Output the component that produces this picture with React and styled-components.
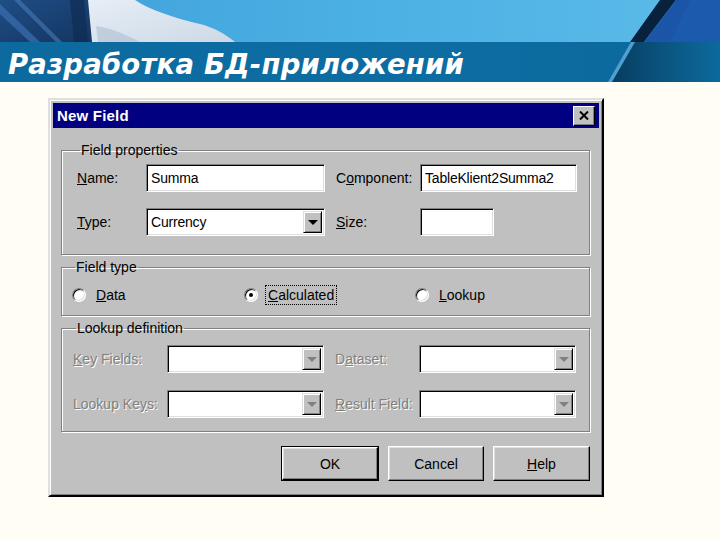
import React from "react";
import styled, { createGlobalStyle } from "styled-components";

const Global = createGlobalStyle`
  html, body { margin: 0; padding: 0; }
  body { background: #fffdf4; font-family: "Liberation Sans", Arial, sans-serif; }
`;

const Page = styled.div`
  width: 720px;
  height: 540px;
  overflow: hidden;
  background: #fffdf4;
  display: flex;
  flex-direction: column;
`;

const Header = styled.header`
  display: flex;
  flex-direction: column;
`;

const PhotoStrip = styled.svg`
  display: block;
  width: 720px;
  height: 42px;
`;

const TitleBand = styled.div`
  position: relative;
  height: 40px;
  background: linear-gradient(90deg, #0c6a9f 0%, #0d6da2 60%, #0c6a9e 85%);
  display: flex;
  align-items: center;
  padding-left: 8px;
  overflow: hidden;
`;

const BandCorner = styled.svg`
  position: absolute;
  right: 0;
  top: 0;
  width: 120px;
  height: 40px;
`;

const Title = styled.h1`
  margin: 0;
  font-family: "DejaVu Sans", Verdana, sans-serif;
  font-weight: bold;
  font-style: italic;
  font-size: 27.5px;
  color: #ffffff;
  letter-spacing: 0.2px;
  position: relative;
  top: 2px;
`;

const Content = styled.main`
  padding: 16px 0 0 48px;
`;

const Window = styled.div`
  width: 556px;
  height: 399px;
  box-sizing: border-box;
  background: #c0c0c0;
  border-top: 2px solid #dfdfdf;
  border-left: 2px solid #dfdfdf;
  border-right: 2px solid #000000;
  border-bottom: 2px solid #000000;
  box-shadow: inset 1px 1px 0 #ffffff, inset -1px -1px 0 #808080;
  padding: 3px;
  display: flex;
  flex-direction: column;
  font-family: "Liberation Sans", Arial, sans-serif;
  font-size: 14px;
  color: #000;
`;

const Caption = styled.div`
  height: 25px;
  background: #000080;
  display: flex;
  align-items: center;
  justify-content: space-between;
  padding: 0 4px 0 4px;
`;

const CaptionText = styled.span`
  color: #fff;
  font-weight: bold;
  font-size: 15px;
  letter-spacing: 0.2px;
`;

const CloseBtn = styled.div`
  width: 22px;
  height: 20px;
  box-sizing: border-box;
  background: #c0c0c0;
  border-top: 1px solid #fff;
  border-left: 1px solid #fff;
  border-right: 1px solid #000;
  border-bottom: 1px solid #000;
  box-shadow: inset -1px -1px 0 #808080;
  display: flex;
  align-items: center;
  justify-content: center;
`;

const Body = styled.div`
  flex: 1;
  padding: 14px 9px 0 8px;
  display: flex;
  flex-direction: column;
  gap: 4px;
`;

const Group = styled.fieldset`
  margin: 0;
  padding: ${(p) => p.$pad || "4px 10px 10px 10px"};
  border: 1px solid #808080;
  box-shadow: 1px 1px 0 #ffffff, inset 1px 1px 0 #ffffff;
  height: ${(p) => p.$h}px;
  box-sizing: border-box;
`;

const Legend = styled.legend`
  padding: 0 1px;
  margin-left: 3px;
  font-size: 14px;
  line-height: 16px;
`;

const FieldGrid = styled.div`
  display: grid;
  grid-template-columns: ${(p) => p.$cols};
  row-gap: ${(p) => p.$rowGap}px;
  align-items: center;
`;

const Label = styled.span`
  font-size: 14px;
  color: ${(p) => (p.$disabled ? "#808080" : "#000")};
  text-shadow: ${(p) => (p.$disabled ? "1px 1px 0 #ffffff" : "none")};
  u { text-decoration: underline; }
`;

const Edit = styled.div`
  height: 28px;
  width: ${(p) => (p.$w ? `${p.$w}px` : "auto")};
  box-sizing: border-box;
  background: #fff;
  border-top: 1px solid #808080;
  border-left: 1px solid #808080;
  border-right: 1px solid #fff;
  border-bottom: 1px solid #fff;
  box-shadow: inset 1px 1px 0 #000, inset -1px -1px 0 #dfdfdf;
  display: flex;
  align-items: center;
  padding-left: 4px;
  font-size: 14px;
  letter-spacing: -0.2px;
`;

const Combo = styled(Edit)`
  padding: 2px 2px 2px 4px;
  justify-content: space-between;
`;

const ComboText = styled.span`
  flex: 1;
`;

const ArrowBtn = styled.div`
  width: 19px;
  height: 100%;
  box-sizing: border-box;
  background: #c0c0c0;
  border-top: 1px solid #dfdfdf;
  border-left: 1px solid #dfdfdf;
  border-right: 1px solid #000;
  border-bottom: 1px solid #000;
  box-shadow: inset 1px 1px 0 #fff, inset -1px -1px 0 #808080;
  display: flex;
  align-items: center;
  justify-content: center;
`;

const Arrow = styled.div`
  width: 0;
  height: 0;
  border-left: 5px solid transparent;
  border-right: 5px solid transparent;
  border-top: 5px solid ${(p) => (p.$disabled ? "#808080" : "#000")};
`;

const RadioRow = styled.div`
  display: grid;
  grid-template-columns: 172px 171px 1fr;
  align-items: center;
`;

const RadioItem = styled.div`
  display: flex;
  align-items: center;
  gap: 8px;
`;

const RadioCircle = styled.div`
  width: 14px;
  height: 14px;
  box-sizing: border-box;
  border-radius: 50%;
  background: #fff;
  border: 1px solid;
  border-color: #808080 #ffffff #ffffff #808080;
  box-shadow: inset 1px 1px 0 #000, inset -1px -1px 0 #dfdfdf;
  display: flex;
  align-items: center;
  justify-content: center;
  &::after {
    content: "";
    width: 4px;
    height: 4px;
    border-radius: 50%;
    background: ${(p) => (p.$checked ? "#000" : "transparent")};
  }
`;

const RadioLabel = styled.span`
  font-size: 14px;
  padding: 1px 2px;
  outline: ${(p) => (p.$focus ? "1px dotted #000" : "none")};
`;

const ButtonRow = styled.div`
  display: flex;
  justify-content: flex-end;
  gap: 9px;
  padding-top: 10px;
`;

const Button = styled.div`
  width: ${(p) => p.$w}px;
  height: 35px;
  box-sizing: border-box;
  background: #c0c0c0;
  border: ${(p) => (p.$default ? "1px solid #000" : "none")};
  display: flex;
`;

const ButtonFace = styled.div`
  flex: 1;
  box-sizing: border-box;
  border-top: 1px solid #fff;
  border-left: 1px solid #fff;
  border-right: 1px solid #000;
  border-bottom: 1px solid #000;
  box-shadow: inset -1px -1px 0 #808080, inset 1px 1px 0 #dfdfdf;
  display: flex;
  align-items: center;
  justify-content: center;
  font-size: 14px;
`;

function ComboBox({ text, w, disabled }) {
  return (
    <Combo $w={w}>
      <ComboText>{text}</ComboText>
      <ArrowBtn>
        <Arrow $disabled={disabled} />
      </ArrowBtn>
    </Combo>
  );
}

function Photo() {
  return (
    <PhotoStrip viewBox="0 0 720 42" preserveAspectRatio="none">
      <defs>
        <linearGradient id="sky" x1="0" y1="0" x2="1" y2="0">
          <stop offset="0" stopColor="#3f9fd8" />
          <stop offset="0.5" stopColor="#4bb0e4" />
          <stop offset="1" stopColor="#5cbbe8" />
        </linearGradient>
        <linearGradient id="left" x1="0" y1="0" x2="1" y2="1">
          <stop offset="0" stopColor="#1f4d86" />
          <stop offset="1" stopColor="#143560" />
        </linearGradient>
        <linearGradient id="hand" x1="0" y1="0" x2="1" y2="1">
          <stop offset="0" stopColor="#e6eef6" />
          <stop offset="1" stopColor="#cdd9e6" />
        </linearGradient>
      </defs>
      <rect x="0" y="0" width="720" height="42" fill="url(#sky)" />
      <path d="M0 0 H95 L92 42 H0 Z" fill="url(#left)" />
      <path d="M0 4 L40 42 H30 L0 14 Z" fill="#3a6fb0" opacity="0.7" />
      <path d="M20 0 L62 42 H56 L14 0 Z" fill="#4f86c2" opacity="0.5" />
      <path d="M70 0 H84 L88 42 H74 Z" fill="#0e2a50" opacity="0.6" />
      <path d="M88 0 H135 C150 10 175 18 200 24 C215 28 225 34 235 42 H92 Z" fill="url(#hand)" />
      <path d="M96 26 C110 28 125 34 140 42 H98 Z" fill="#b9c7d8" opacity="0.8" />
      <path d="M660 0 H676 L644 42 H630 Z" fill="#08213d" />
      <path d="M676 0 H720 V42 H644 Z" fill="#1a55a8" />
      <path d="M690 0 H720 V42 H670 Z" fill="#1e5db2" opacity="0.6" />
    </PhotoStrip>
  );
}

export default function App() {
  return (
    <Page>
      <Global />
      <Header>
        <Photo />
        <TitleBand>
          <BandCorner viewBox="0 0 120 40" preserveAspectRatio="none">
            <defs>
              <linearGradient id="corner" x1="0" y1="0" x2="1" y2="0">
                <stop offset="0" stopColor="#073c5e" />
                <stop offset="0.5" stopColor="#0a5580" />
                <stop offset="1" stopColor="#0c6a9c" />
              </linearGradient>
            </defs>
            <path d="M33 0 H120 V40 H10 Z" fill="url(#corner)" />
            <path d="M31 0 H35 L12 40 H8 Z" fill="#4f9fcf" />
          </BandCorner>
          <Title>Разработка БД-приложений</Title>
        </TitleBand>
      </Header>
      <Content>
        <Window>
          <Caption>
            <CaptionText>New Field</CaptionText>
            <CloseBtn>
              <svg width="10" height="9" viewBox="0 0 10 9">
                <path d="M1 0.5 L9 8.5 M9 0.5 L1 8.5" stroke="#000" strokeWidth="2" />
              </svg>
            </CloseBtn>
          </Caption>
          <Body>
            <Group $h={113} $pad="6px 10px 10px 15px">
              <Legend>Field properties</Legend>
              <FieldGrid $cols="69px 179px 11px 84px 157px" $rowGap={16}>
                <Label><u>N</u>ame:</Label>
                <Edit>Summa</Edit>
                <span />
                <Label>C<u>o</u>mponent:</Label>
                <Edit>TableKlient2Summa2</Edit>
                <Label><u>T</u>ype:</Label>
                <ComboBox text="Currency" />
                <span />
                <Label><u>S</u>ize:</Label>
                <Edit $w={74} />
              </FieldGrid>
            </Group>
            <Group $h={57} $pad="11px 10px 5px 10px">
              <Legend>Field type</Legend>
              <RadioRow>
                <RadioItem>
                  <RadioCircle />
                  <RadioLabel><u>D</u>ata</RadioLabel>
                </RadioItem>
                <RadioItem>
                  <RadioCircle $checked />
                  <RadioLabel $focus><u>C</u>alculated</RadioLabel>
                </RadioItem>
                <RadioItem>
                  <RadioCircle />
                  <RadioLabel><u>L</u>ookup</RadioLabel>
                </RadioItem>
              </RadioRow>
            </Group>
            <Group $h={112} $pad="9px 10px 10px 11px">
              <Legend>Lookup definition</Legend>
              <FieldGrid $cols="94px 157px 11px 84px 157px" $rowGap={17}>
                <Label $disabled><u>K</u>ey Fields:</Label>
                <ComboBox disabled />
                <span />
                <Label $disabled>D<u>a</u>taset:</Label>
                <ComboBox disabled />
                <Label $disabled>Lookup Ke<u>y</u>s:</Label>
                <ComboBox disabled />
                <span />
                <Label $disabled><u>R</u>esult Field:</Label>
                <ComboBox disabled />
              </FieldGrid>
            </Group>
            <ButtonRow>
              <Button $w={98} $default><ButtonFace>OK</ButtonFace></Button>
              <Button $w={96}><ButtonFace>Cancel</ButtonFace></Button>
              <Button $w={97}><ButtonFace><span><u>H</u>elp</span></ButtonFace></Button>
            </ButtonRow>
          </Body>
        </Window>
      </Content>
    </Page>
  );
}
